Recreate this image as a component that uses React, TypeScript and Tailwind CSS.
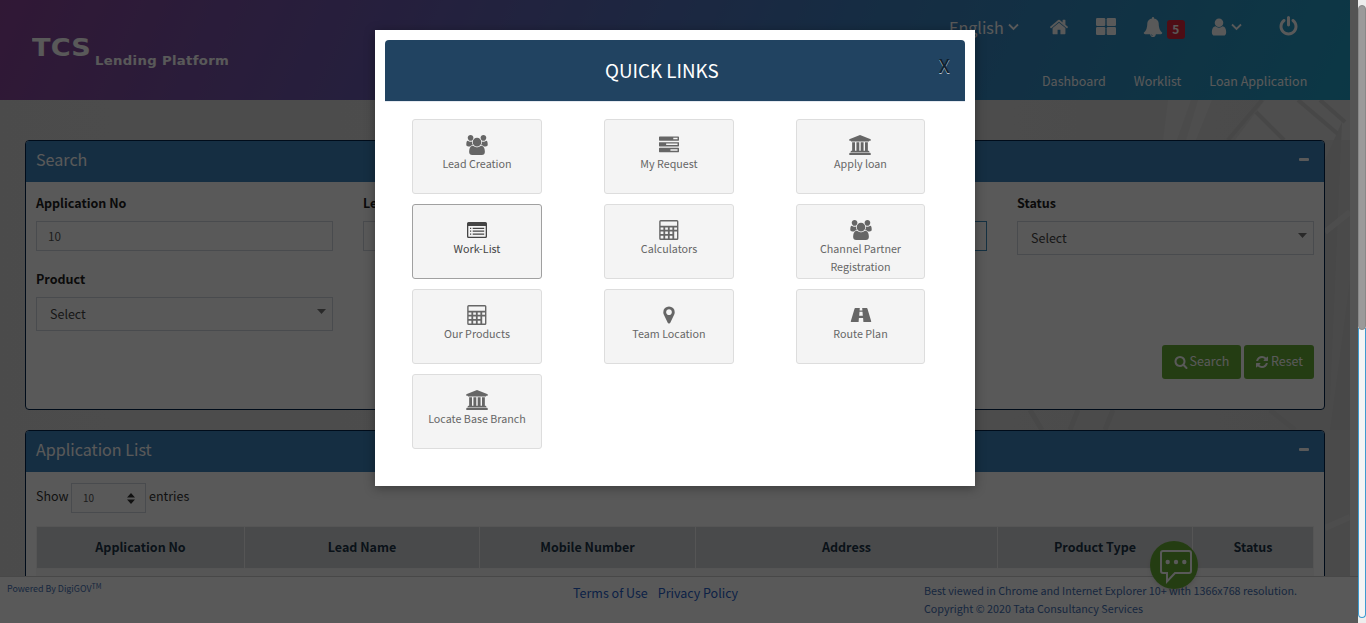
import React from "react";

const P = {
  users:
    "M593 896q-162 5-265 128h-134q-82 0-138-40.5t-56-118.5q0-353 124-353 6 0 43.5 21t97.5 42.5 119 21.5q67 0 133-23-5 37-5 66 0 139 81 256zm1071 637q0 120-73 189.5t-194 69.5h-874q-121 0-194-69.5t-73-189.5q0-53 3.5-103.5t14-109 26.5-108.5 43-97.5 62-81 85.5-53.5 111.5-20q10 0 43 21.5t73 48 107 48 135 21.5 135-21.5 107-48 73-48 43-21.5q61 0 111.5 20t85.5 53.5 62 81 43 97.5 26.5 108.5 14 109 3.5 103.5zm-1024-1277q0 106-75 181t-181 75-181-75-75-181 75-181 181-75 181 75 75 181zm704 384q0 159-112.5 271.5t-271.5 112.5-271.5-112.5-112.5-271.5 112.5-271.5 271.5-112.5 271.5 112.5 112.5 271.5zm576 225q0 78-56 118.5t-138 40.5h-134q-103-123-265-128 81-117 81-256 0-29-5-66 66 23 133 23 59 0 119-21.5t97.5-42.5 43.5-21q124 0 124 353zm-128-609q0 106-75 181t-181 75-181-75-75-181 75-181 181-75 181 75 75 181z",
  home: "M1472 992v480q0 26-19 45t-45 19h-384v-384h-256v384h-384q-26 0-45-19t-19-45v-480q0-1 .5-3t.5-3l575-474 575 474q1 2 1 6zm223-69l-62 74q-8 9-21 11h-3q-13 0-21-7l-692-577-692 577q-12 8-24 7-13-2-21-11l-62-74q-8-10-7-23.5t11-21.5l719-599q32-26 76-26t76 26l244 204v-195q0-14 9-23t23-9h192q14 0 23 9t9 23v408l219 182q10 8 11 21.5t-7 23.5z",
  search:
    "M1216 832q0-185-131.5-316.5t-316.5-131.5-316.5 131.5-131.5 316.5 131.5 316.5 316.5 131.5 316.5-131.5 131.5-316.5zm512 832q0 52-38 90t-90 38q-54 0-90-38l-343-342q-179 124-399 124-143 0-273.5-55.5t-225-150-150-225-55.5-273.5 55.5-273.5 150-225 225-150 273.5-55.5 273.5 55.5 225 150 150 225 55.5 273.5q0 220-124 399l343 343q37 37 37 90z",
  refresh:
    "M1639 1056q0 5-1 7-64 268-268 434.5t-478 166.5q-146 0-282.5-55t-243.5-157l-129 129q-19 19-45 19t-45-19-19-45v-448q0-26 19-45t45-19h448q26 0 45 19t19 45-19 45l-137 137q71 66 161 102t187 36q134 0 250-65t186-179q11-17 53-117 8-23 30-23h192q13 0 22.5 9.5t9.5 22.5zm25-800v448q0 26-19 45t-45 19h-448q-26 0-45-19t-19-45 19-45l138-138q-148-137-349-137-134 0-250 65t-186 179q-11 17-53 117-8 23-30 23h-199q-13 0-22.5-9.5t-9.5-22.5v-7q65-268 270-434.5t480-166.5q146 0 284 55.5t245 156.5l130-129q19-19 45-19t45 19 19 45z",
  power:
    "M1664 896q0 156-61 298t-164 245-245 164-298 61-298-61-245-164-164-245-61-298q0-182 80.5-343t226.5-270q43-32 95.5-25t83.5 50q32 42 24.5 94.5t-49.5 84.5q-98 74-151.5 181t-53.5 228q0 104 40.5 198.5t109.5 163.5 163.5 109.5 198.5 40.5 198.5-40.5 163.5-109.5 109.5-163.5 40.5-198.5q0-121-53.5-228t-151.5-181q-42-32-49.5-84.5t24.5-94.5q31-43 84-50t95 25q146 109 226.5 270t80.5 343zm-640-768v640q0 52-38 90t-90 38-90-38-38-90v-640q0-52 38-90t90-38 90 38 38 90z",
  user: "M1536 1399q0 109-62.5 187t-150.5 78h-854q-88 0-150.5-78t-62.5-187q0-85 8.5-160.5t31.5-152 58.5-131 94-89 134.5-34.5q131 128 313 128t313-128q76 0 134.5 34.5t94 89 58.5 131 31.5 152 8.5 160.5zm-256-887q0 159-112.5 271.5t-271.5 112.5-271.5-112.5-112.5-271.5 112.5-271.5 271.5-112.5 271.5 112.5 112.5 271.5z",
  bell: "M912 1696q0-16-16-16-59 0-101.5-42.5t-42.5-101.5q0-16-16-16t-16 16q0 73 51.5 124.5t124.5 51.5q16 0 16-16zm816-288q0 52-38 90t-90 38h-448q0 106-75 181t-181 75-181-75-75-181h-448q-52 0-90-38t-38-90q50-42 91-88t85-119.5 74.5-158.5 50-206 19.5-260q0-152 117-282.5t307-158.5q-8-19-8-39 0-40 28-68t68-28 68 28 28 68q0 20-8 39 190 28 307 158.5t117 282.5q0 139 19.5 260t50 206 74.5 158.5 85 119.5 91 88z",
  bank: "M960 0l960 384v128h-128q0 26-20.5 45t-48.5 19h-1526q-28 0-48.5-19t-20.5-45h-128v-128zm-704 640h256v768h128v-768h256v768h128v-768h256v768h128v-768h256v768h59q28 0 48.5 19t20.5 45v64h-1664v-64q0-26 20.5-45t48.5-19h59v-768zm1595 960q28 0 48.5 19t20.5 45v128h-1920v-128q0-26 20.5-45t48.5-19h1782z",
  tasks:
    "M1024 1408h640v-128h-640v128zm-384-512h1024v-128h-1024v128zm640-512h384v-128h-384v128zm512 832v256q0 26-19 45t-45 19h-1664q-26 0-45-19t-19-45v-256q0-26 19-45t45-19h1664q26 0 45 19t19 45zm0-512v256q0 26-19 45t-45 19h-1664q-26 0-45-19t-19-45v-256q0-26 19-45t45-19h1664q26 0 45 19t19 45zm0-512v256q0 26-19 45t-45 19h-1664q-26 0-45-19t-19-45v-256q0-26 19-45t45-19h1664q26 0 45 19t19 45z",
  marker:
    "M1152 640q0-106-75-181t-181-75-181 75-75 181 75 181 181 75 181-75 75-181zm256 0q0 109-33 179l-364 774q-16 33-47.5 52t-67.5 19-67.5-19-46.5-52l-365-774q-33-70-33-179 0-212 150-362t362-150 362 150 150 362z",
};

function Glyph({ d, wide, className }: { d: string; wide?: boolean; className: string }) {
  return (
    <svg viewBox={wide ? "0 0 1920 1792" : "0 0 1792 1792"} className={className} fill="currentColor">
      <path d={d} />
    </svg>
  );
}

function Calculator() {
  return (
    <svg viewBox="0 0 20 20" className="mr-px h-5 w-5" fill="none" stroke="currentColor" strokeWidth="1.4">
      <rect x="0.9" y="0.7" width="17.8" height="18.6" rx="0.8" />
      <path d="M1 6.700h17.800M1 10.700h17.800M1 14.900h13.300M5.300 7v12.400M9.800 7v12.400M14.300 7v12.400" strokeWidth="1.800" />
    </svg>
  );
}

function ListAlt() {
  return (
    <svg viewBox="0 0 20 20" className="h-5 w-5" fill="currentColor">
      <path
        fillRule="evenodd"
        d="M1.5 2h17A1.5 1.5 0 0 1 20 3.500v13A1.500 1.500 0 0 1 18.500 18h-17A1.500 1.500 0 0 1 0 16.500v-13A1.500 1.500 0 0 1 1.500 2zM1.300 6v10.300q0 .400.400.400h16.600q.400 0 .400-.400V6z"
      />
      <path d="M3 7.700h1.200v1.200H3zM3 10.600h1.200v1.200H3zM3 13.500h1.200v1.200H3zM5.700 7.700h11.500v1.200H5.700zM5.700 10.600h11.500v1.200H5.700zM5.700 13.500h11.500v1.200H5.700z" />
    </svg>
  );
}

function Road() {
  return (
    <svg viewBox="0 0 22 20" className="h-5 w-[22px]" fill="currentColor">
      <path
        fillRule="evenodd"
        d="M5.300 3h4.500l-.200 2.500h2.800L12.200 3h4.500q.500 0 .700.500L21.200 16.300q.200.700-.500.700h-7.300l-.300-4H8.900l-.300 4H1.300q-.700 0-.500-.700L4.600 3.500q.200-.500.700-.500zM9.500 6.800L9.200 10.800h3.600L12.500 6.800z"
      />
    </svg>
  );
}

function Chevron({ className }: { className: string }) {
  return (
    <svg viewBox="0 0 11 8" className={className} fill="none" stroke="currentColor" strokeWidth="1.8">
      <path d="M1 1.500l4.500 4.500L10 1.500" />
    </svg>
  );
}

const users = <Glyph d={P.users} wide className="h-5 w-[22px]" />;
const bank = <Glyph d={P.bank} wide className="mr-px h-5 w-[22px]" />;

const links: { label: string; icon: React.ReactNode; active?: boolean }[] = [
  { label: "Lead Creation", icon: users },
  { label: "My Request", icon: <Glyph d={P.tasks} className="h-5 w-5" /> },
  { label: "Apply loan", icon: bank },
  { label: "Work-List", icon: <ListAlt />, active: true },
  { label: "Calculators", icon: <Calculator /> },
  { label: "Channel Partner Registration", icon: users },
  { label: "Our Products", icon: <Calculator /> },
  { label: "Team Location", icon: <Glyph d={P.marker} className="h-5 w-5" /> },
  { label: "Route Plan", icon: <Road /> },
  { label: "Locate Base Branch", icon: bank },
];

function Header() {
  return (
    <header className="flex h-[100px] w-[1350px] shrink-0 justify-between bg-[linear-gradient(115deg,#8b4599_0%,#6a5cb0_30%,#3f7fc0_62%,#229fc6_100%)] text-white">
      <div className="flex h-8 items-start pt-[34px] pl-8 font-['DejaVu_Sans'] font-bold">
        <span className="w-[63px] origin-left scale-x-[1.13] text-[24px] leading-[29px] tracking-[0.200px]">TCS</span>
        <span className="origin-left scale-x-[1.06] pt-[19px] text-[12.500px] leading-[16px] tracking-[0.300px]">
          Lending Platform
        </span>
      </div>
      <div className="flex w-[401px] flex-col">
        <div className="flex h-[54px] items-center">
          <span className="text-[16.100px] leading-6">English</span>
          <Chevron className="ml-1 h-2 w-[11px]" />
          <Glyph d={P.home} className="ml-[30px] h-5 w-5" />
          <svg viewBox="0 0 20 17" className="mb-[2px] ml-[27px] h-[17px] w-5" fill="currentColor">
            <rect width="9.300" height="8" rx="1.200" />
            <rect x="10.700" width="9.300" height="8" rx="1.200" />
            <rect y="9" width="9.300" height="8" rx="1.200" />
            <rect x="10.700" y="9" width="9.300" height="8" rx="1.200" />
          </svg>
          <Glyph d={P.bell} className="ml-[27px] h-5 w-5" />
          <span className="mt-[4px] ml-1 flex h-[19px] w-[18px] items-center justify-center rounded-[3px] bg-[#e0263c] text-[12px] font-bold">
            5
          </span>
          <Glyph d={P.user} className="ml-[24px] h-5 w-5" />
          <Chevron className="ml-[2px] h-2 w-[11px]" />
          <Glyph d={P.power} className="mb-px ml-[36px] h-[21px] w-[21px]" />
        </div>
        <nav className="flex gap-7 pt-[17px] pl-[93px] text-[12.500px] leading-5 whitespace-nowrap">
          <span>Dashboard</span>
          <span>Worklist</span>
          <span>Loan Application</span>
        </nav>
      </div>
    </header>
  );
}

function PanelHead({ title }: { title: string }) {
  return (
    <div className="flex h-[41px] items-center justify-between bg-[#3d83bd] pr-[15px] pl-[10px] text-white">
      <h2 className="pb-[5px] text-[16.100px] leading-6">{title}</h2>
      <span className="mb-[5px] h-[3px] w-[10px] rounded-[1px] bg-white" />
    </div>
  );
}

function Field({ label, children }: { label: string; children: React.ReactNode }) {
  return (
    <div className="h-[76px] w-[297px]">
      <div className="h-[29px] text-[12.500px] leading-[22px] font-bold text-[#222]">{label}</div>
      {children}
    </div>
  );
}

function SelectBox() {
  return (
    <div className="flex h-[34px] justify-between border border-[#d2d6de] pr-[6px] pl-[13px] text-[12.500px] leading-[32px] text-[#444]">
      <span>Select</span>
      <svg viewBox="0 0 9 5" className="mt-[11px] h-[5px] w-[9px]" fill="#777">
        <path d="M0 0h9L4.500 5z" />
      </svg>
    </div>
  );
}

const columns = [
  { name: "Application No", width: "w-[207px]" },
  { name: "Lead Name", width: "w-[234px]" },
  { name: "Mobile Number", width: "w-[215px]" },
  { name: "Address", width: "w-[301px]" },
  { name: "Product Type", width: "w-[194px]" },
  { name: "Status", width: "flex-1" },
];

function Backdrop() {
  return (
    <svg viewBox="0 0 1350 476" className="absolute inset-0 h-full w-full" preserveAspectRatio="none">
      <defs>
        <linearGradient id="wall" x1="0" x2="1" y1="0" y2="0">
          <stop offset="0" stopColor="#d8d8d8" />
          <stop offset="0.500" stopColor="#dedede" />
          <stop offset="1" stopColor="#d4d4d4" />
        </linearGradient>
      </defs>
      <rect width="1350" height="476" fill="url(#wall)" />
      <path d="M1168 0l-5 40h14l14-40zM1198 0l-12 40h10l16-40zM1235 40l30-40h85v40z" fill="#dedede" />
      <path d="M1228 40l34-40M1256 12l28 28M1320 0l25 22M1298 0l40 34" stroke="#cbcbcb" strokeWidth="4" fill="none" />
      <path d="M1342 22l-12 278h-5V60zM1350 180l-20 150h20z" fill="#cdcdcd" />
      <path d="M1325 132l25-20M1325 428l25-11" stroke="#dddddd" strokeWidth="6" />
      <path d="M1030 310l12 20M1070 330l8-20M1105 330l8-20M1270 310l25 20" stroke="#cdcdcd" strokeWidth="5" />
    </svg>
  );
}

export default function App() {
  return (
    <div className="relative flex h-[623px] w-[1366px] overflow-hidden bg-[#f4f4f4] font-['Noto_Sans_CJK_SC',sans-serif]">
      <div className="relative flex h-full w-[1358px] flex-col bg-[#f1f1f1]">
        <Header />
        <main className="relative h-[476px] w-[1350px] shrink-0 overflow-hidden">
          <Backdrop />
          <div className="relative flex flex-col gap-5 px-[25px] pt-10">
            <section className="flex h-[270px] flex-col overflow-hidden rounded-[4px] border border-[#00244a] bg-white">
              <PanelHead title="Search" />
              <div className="flex flex-wrap gap-x-[30px] px-[10px] pt-[10px]">
                <Field label="Application No">
                  <div className="h-[30px] border border-[#d2d6de] pl-[11px] text-[11.700px] leading-[28px] text-[#555]">10</div>
                </Field>
                <Field label="Lead Name">
                  <div className="h-[30px] border border-[#d2d6de]" />
                </Field>
                <Field label="Mobile Number">
                  <div className="h-[30px] border border-[#3c8dbc]" />
                </Field>
                <Field label="Status">
                  <SelectBox />
                </Field>
                <Field label="Product">
                  <SelectBox />
                </Field>
              </div>
              <div className="flex justify-end gap-[3px] px-[10px] pt-px text-[12.500px] text-white">
                <div className="flex h-[34px] w-[79px] items-center justify-center gap-[2px] rounded-[3px] bg-[#68ae38] pb-px">
                  <Glyph d={P.search} className="h-[14px] w-[14px]" />
                  <span>Search</span>
                </div>
                <div className="flex h-[34px] w-[70px] items-center justify-center gap-[2px] rounded-[3px] bg-[#68ae38] pb-px">
                  <Glyph d={P.refresh} className="h-[14px] w-[14px]" />
                  <span>Reset</span>
                </div>
              </div>
            </section>

            <section className="flex h-[270px] flex-col overflow-hidden rounded-[4px] border border-[#00244a] bg-white">
              <PanelHead title="Application List" />
              <div className="flex items-center px-[10px] pt-[11px] text-[12.500px] text-[#333]">
                <span className="w-[35px] pb-[3px]">Show</span>
                <div className="flex h-[30px] w-[75px] items-center justify-between border border-[#d2d6de] pr-[10px] pl-[11px] text-[10px] text-[#555]">
                  <span className="pb-px">10</span>
                  <svg viewBox="0 0 8 11" className="h-[11px] w-2" fill="#333">
                    <path d="M0 4.500L4 0l4 4.500zM0 6.500L4 11l4-4.500z" />
                  </svg>
                </div>
                <span className="ml-[3px] pb-[3px]">entries</span>
              </div>
              <div className="mx-[10px] mt-[13px] flex h-[43px] gap-px border border-[#f4f4f4] bg-[#f4f4f4] text-[12.500px] font-bold text-[#1d3448]">
                {columns.map((c) => (
                  <div key={c.name} className={`flex h-[41px] items-center justify-center bg-[#d2d4d6] ${c.width}`}>
                    {c.name}
                  </div>
                ))}
              </div>
              <div className="mx-[10px] h-10 bg-[#f6f6f6]" />
            </section>
          </div>
        </main>
        <footer className="flex h-[47px] w-full items-start border-t border-[#cfcfcf] bg-white text-[#4470b4]">
          <div className="w-[573px] pt-[3px] pl-[7px] text-[8.900px] leading-[18px]">
            Powered By DigiGOV <span className="relative -top-[3px] -ml-[2px] text-[7.100px]">TM</span>
          </div>
          <div className="flex w-[351px] gap-[10px] pt-[6px] text-[12.500px] leading-5 text-[#2560c8]">
            <span>Terms of Use</span>
            <span>Privacy Policy</span>
          </div>
          <div className="pt-[5px] text-[10.740px] leading-[18px] whitespace-nowrap">
            <div>Best viewed in Chrome and Internet Explorer 10+ with 1366x768 resolution.</div>
            <div>Copyright © 2020 Tata Consultancy Services</div>
          </div>
        </footer>

        <div className="absolute top-[541px] left-[1150px] flex h-12 w-12 items-center justify-center rounded-full bg-[#68b036] shadow-md">
          <svg viewBox="0 0 32 34" className="mt-1 ml-1 h-[34px] w-8" fill="none" stroke="white" strokeWidth="2">
            <path d="M3 1h26a2 2 0 0 1 2 2v18a2 2 0 0 1-2 2H15l-8 8.500V23H3a2 2 0 0 1-2-2V3a2 2 0 0 1 2-2z" />
            <g fill="white" stroke="none">
              <circle cx="7.700" cy="12" r="2.200" />
              <circle cx="16" cy="12" r="2.200" />
              <circle cx="24.300" cy="12" r="2.200" />
            </g>
          </svg>
        </div>

        <div className="absolute inset-0 bg-black/65" />
      </div>

      <div className="relative w-2 bg-[#ededed] pt-[5px]">
        <div className="absolute inset-x-0 top-[328px] bottom-[5px] rounded-b-[4px] border-x border-b border-[#3d9bd0] bg-[#f4f4f4]" />
        <div className="relative h-[325px] w-full rounded-[4px] border border-[#888] bg-[#9a9a9a]" />
      </div>

      <div className="absolute top-[30px] left-[375px] flex h-[456px] w-[600px] flex-col bg-white p-[10px] shadow-[0_2px_10px_rgba(0,0,0,0.350)]">
        <div className="flex h-[61px] shrink-0 items-center rounded-t-[4px] bg-[#214361] pr-[15px] text-white">
          <h1 className="ml-[220px] text-[18.800px] font-normal whitespace-nowrap">QUICK LINKS</h1>
          <span className="mb-[11px] ml-auto text-[18.800px] font-medium text-[#0f1f2e] [text-shadow:0_1px_0_#b8c4ce]">X</span>
        </div>
        <div className="grid grid-cols-[130px_130px_129px] gap-x-[62px] gap-y-[10px] border-t border-[#e5e9f0] pt-[17px] pl-[27px]">
          {links.map((l) => (
            <div
              key={l.label}
              className={`flex h-[75px] flex-col items-center rounded-[3px] border bg-[#f4f4f4] px-3 pt-[15px] text-center text-[10.740px] leading-[18px] ${
                l.active ? "border-[#a0a0a0] text-[#444]" : "border-[#ddd] text-[#666]"
              }`}
            >
              {l.icon}
              <span>{l.label}</span>
            </div>
          ))}
        </div>
      </div>
    </div>
  );
}
